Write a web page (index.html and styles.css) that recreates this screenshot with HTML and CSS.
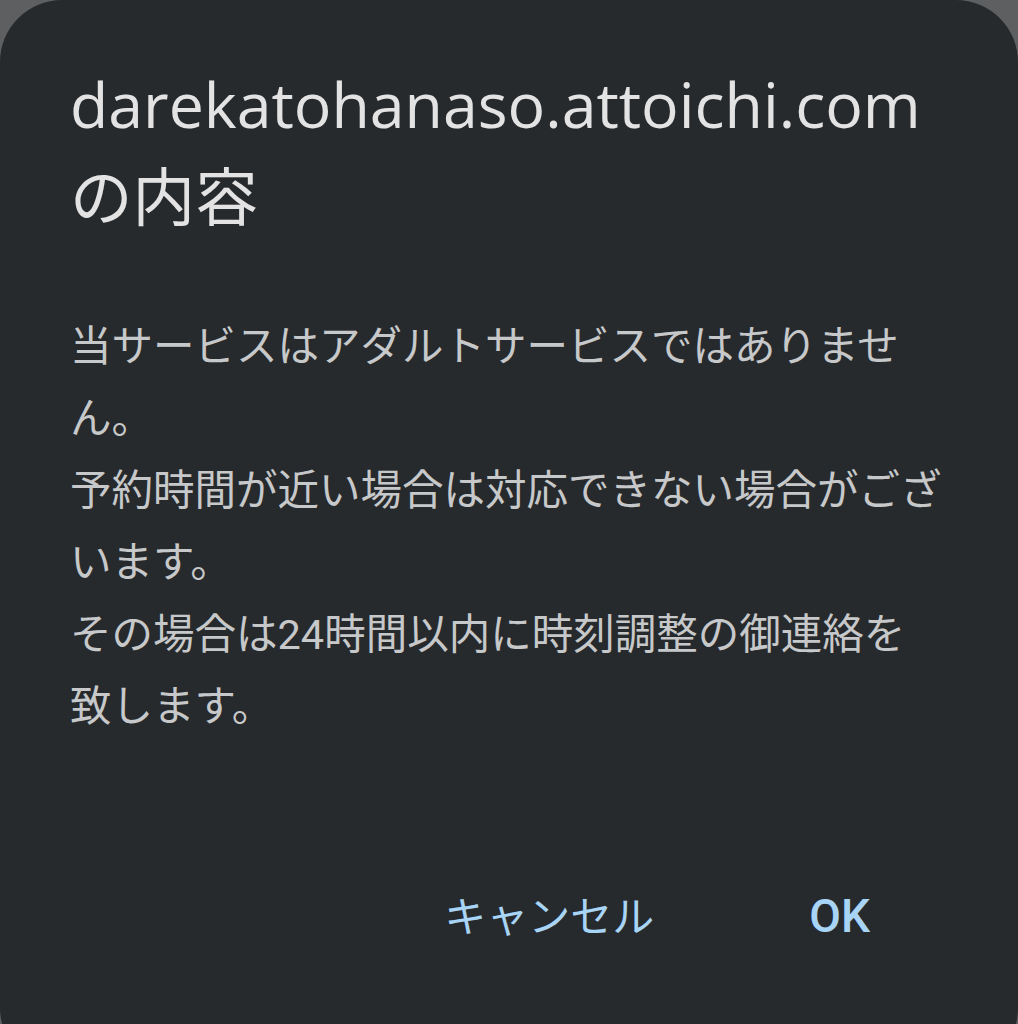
FILE: index.html
```html
<!DOCTYPE html>
<html lang="ja">
<head>
    <meta charset="utf-8">
    <title>darekatohanaso.attoichi.com の内容</title>
    <link rel="stylesheet" href="styles.css">
</head>
<body>
    <div class="dialog">
        <h1 class="title">darekatohanaso.attoichi.com の内容</h1>
        <div class="message">
            <p>当サービスはアダルトサービスではありません。</p>
            <p>予約時間が近い場合は対応できない場合がございます。</p>
            <p>その場合は24時間以内に時刻調整の御連絡を<br>致します。</p>
        </div>
        <div class="actions">
            <button class="btn btn-cancel">キャンセル</button>
            <button class="btn btn-ok">OK</button>
        </div>
    </div>
</body>
</html>
```

FILE: styles.css
```css
html, body {
    margin: 0;
    height: 100%;
    overflow: hidden;
}
body {
    background-color: #5e5f60;
    font-family: "Open Sans", "Noto Sans CJK JP", sans-serif;
}
.dialog {
    box-sizing: border-box;
    height: 1070px;
    background-color: #272a2d;
    border-radius: 62px;
    padding: 58px 70px 0 70px;
    display: flex;
    flex-direction: column;
}
.title {
    margin: 0;
    width: 880px;
    font-size: 62.6px;
    font-weight: 400;
    line-height: 92px;
    color: #e3e3e3;
}
.message {
    margin-top: 69px;
    width: 880px;
    font-family: "Roboto", "Noto Sans CJK JP", sans-serif;
    font-size: 41.5px;
    line-height: 72px;
    color: #c6c8c9;
}
.message p {
    margin: 0;
}
.actions {
    display: flex;
    justify-content: flex-end;
    align-items: center;
    gap: 155px;
    margin-top: 140px;
    padding-right: 78px;
}
.btn {
    background: none;
    border: none;
    padding: 0;
    font-family: "Noto Sans CJK JP", sans-serif;
    font-size: 42px;
    font-weight: 400;
    color: #a8d4f5;
    cursor: pointer;
}
.btn-ok {
    font-family: "Roboto", sans-serif;
    font-size: 46px;
    font-weight: 500;
    margin-top: 4px;
}
```
